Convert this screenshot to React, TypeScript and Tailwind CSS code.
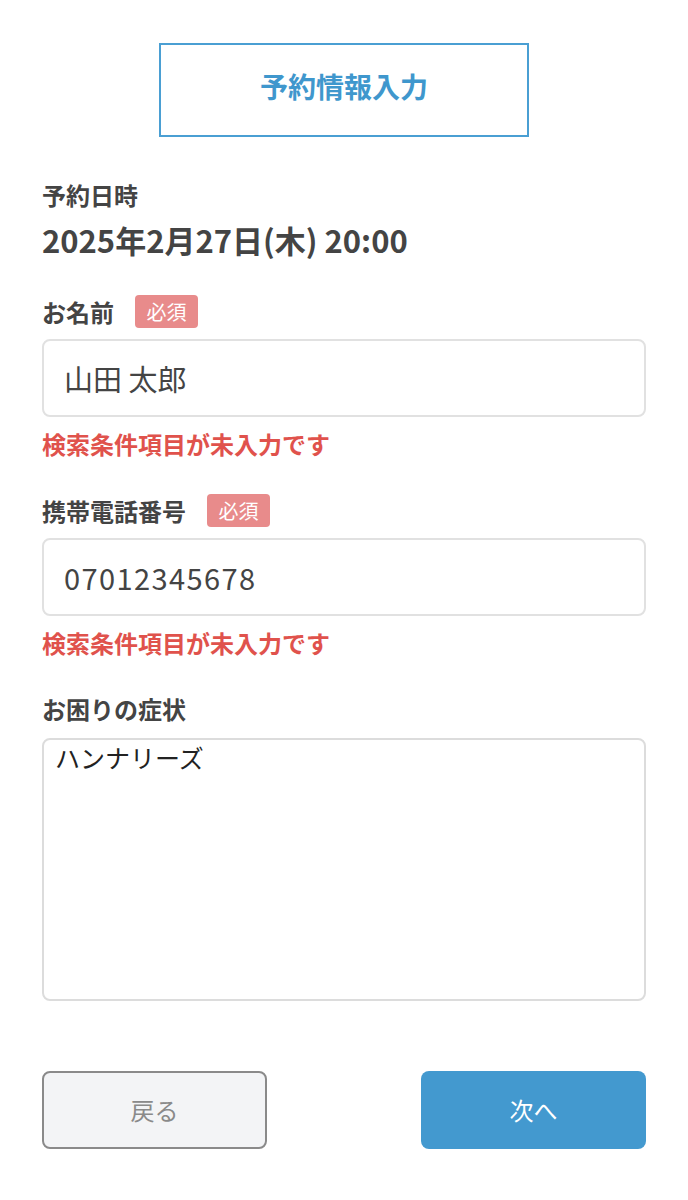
import React from "react";

const font = { fontFamily: '"Noto Sans CJK JP", "Noto Sans", sans-serif' };

function Badge() {
  return (
    <span className="inline-flex items-center justify-center h-[33px] w-[63px] rounded-[4px] bg-[#e88b8b] text-white text-[20px] leading-none">
      必須
    </span>
  );
}

export default function App() {
  return (
    <div className="min-h-[1200px] bg-white px-[42px] pt-[43px] text-[#444]" style={font}>
      <div className="mx-auto flex h-[94px] w-[370px] items-center justify-center border-2 border-[#4a9fd3] pb-[8px]">
        <span className="text-[28px] font-bold text-[#3f97cd]">予約情報入力</span>
      </div>

      <div className="mt-[44px] text-[24px] font-bold leading-[28px]">予約日時</div>
      <div className="mt-[13px] text-[31px] font-bold leading-[36px]">2025年2月27日(木) 20:00</div>

      <div className="mt-[37px] flex items-center gap-[21px]">
        <span className="text-[24px] font-bold leading-[28px]">お名前</span>
        <Badge />
      </div>
      <input
        readOnly
        value="山田 太郎"
        className="mt-[11px] block h-[78px] w-full rounded-[8px] border-2 border-[#e1e1e1] pl-[20px] text-[29px] text-[#444] outline-none"
        style={font}
      />
      <div className="mt-[12px] text-[24px] font-bold leading-[30px] text-[#e0524c]">検索条件項目が未入力です</div>

      <div className="mt-[35px] flex items-center gap-[21px]">
        <span className="text-[24px] font-bold leading-[28px]">携帯電話番号</span>
        <Badge />
      </div>
      <input
        readOnly
        value="07012345678"
        className="mt-[11px] block h-[78px] w-full rounded-[8px] border-2 border-[#e1e1e1] pl-[20px] text-[29px] tracking-[1.4px] text-[#444] outline-none"
        style={font}
      />
      <div className="mt-[12px] text-[24px] font-bold leading-[30px] text-[#e0524c]">検索条件項目が未入力です</div>

      <div className="mt-[37px] text-[24px] font-bold leading-[28px]">お困りの症状</div>
      <textarea
        readOnly
        value="ハンナリーズ"
        className="mt-[15px] block h-[263px] w-full resize-none rounded-[8px] border-2 border-[#dcdcdc] px-[11px] pt-[2px] text-[25px] leading-[30px] text-[#222] outline-none"
        style={font}
      />

      <div className="mt-[70px] flex justify-between">
        <button
          className="h-[78px] w-[225px] rounded-[8px] border-2 border-[#8a8a8a] bg-[#f3f4f6] text-[24px] text-[#8a8a8a]"
          style={font}
        >
          戻る
        </button>
        <button
          className="h-[78px] w-[225px] rounded-[8px] bg-[#4399cf] text-[24px] text-white"
          style={font}
        >
          次へ
        </button>
      </div>
    </div>
  );
}
